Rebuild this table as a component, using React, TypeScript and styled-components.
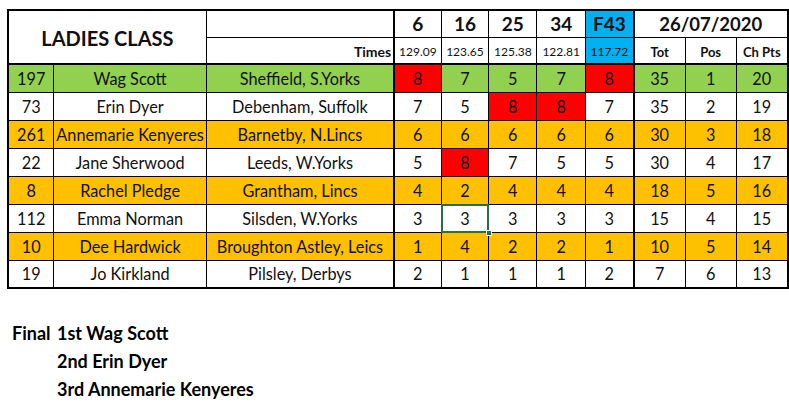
import styled, { createGlobalStyle, css } from "styled-components";

const GlobalStyle = createGlobalStyle`
  body {
    margin: 0;
    background: #ffffff;
    font-family: Lato, "Open Sans", sans-serif;
    color: #111111;
  }
`;

const Page = styled.div`
  padding: 9px 0 0 7px;
`;

const Sheet = styled.table`
  border-collapse: collapse;
  table-layout: fixed;
  border: 2px solid #000;
`;

type CellProps = {
  $bg?: string;
  $thickLeft?: boolean;
  $thickBottom?: boolean;
  $align?: string;
  $selected?: boolean;
};

const Cell = styled.td<CellProps>`
  border: 1px solid #000;
  padding: 0 2px;
  text-align: ${(p) => p.$align || "center"};
  vertical-align: middle;
  font-size: 16.3px;
  white-space: nowrap;
  overflow: hidden;
  background: ${(p) => p.$bg || "#ffffff"};
  ${(p) => p.$thickLeft && "border-left-width: 2px;"}
  ${(p) => p.$thickBottom && "border-bottom-width: 2px;"}
  ${(p) =>
    p.$selected &&
    css`
      position: relative;
      overflow: visible;
      &::after {
        content: "";
        position: absolute;
        left: -1px;
        top: -1px;
        right: -1px;
        bottom: -1px;
        border: 2px solid #217346;
      }
      &::before {
        content: "";
        position: absolute;
        right: -4px;
        bottom: -4px;
        width: 6px;
        height: 6px;
        background: #217346;
        border: 1px solid #fff;
        box-sizing: border-box;
        z-index: 1;
      }
    `}
`;

const Title = styled(Cell)`
  font-size: 20px;
  font-weight: 700;
  padding-top: 2px;
`;

const RaceNo = styled(Cell)`
  font-size: 19px;
  font-weight: 700;
`;

const DateCell = styled(Cell)`
  font-size: 18.5px;
  font-weight: 700;
`;

const Time = styled(Cell)`
  font-size: 12px;
  padding: 3px 0 0;
`;

const Label = styled(Cell)`
  font-size: 13px;
  font-weight: 700;
  padding-top: 3px;
`;

const TimesLabel = styled(Label)`
  font-size: 14px;
  text-align: right;
`;

const HeadRow = styled.tr`
  height: 27px;
`;

const DataRow = styled.tr`
  height: 28px;
`;

const Final = styled.div`
  display: grid;
  grid-template-columns: 45px auto;
  margin: 30px 0 0 5px;
  font-size: 18px;
  font-weight: 700;
  line-height: 28px;
  color: #000;
`;

const GREEN = "#92d050";
const ORANGE = "#ffc000";
const RED = "#ff0000";
const BLUE = "#00b0f0";

const widths = [46, 149, 188, 47, 48, 48, 49, 48, 52, 51, 52];

const rows = [
  { no: "197", name: "Wag Scott", town: "Sheffield, S.Yorks", r: [8, 7, 5, 7, 8], red: [0, 4], tot: 35, pos: 1, pts: 20, bg: GREEN },
  { no: "73", name: "Erin Dyer", town: "Debenham, Suffolk", r: [7, 5, 8, 8, 7], red: [2, 3], tot: 35, pos: 2, pts: 19 },
  { no: "261", name: "Annemarie Kenyeres", town: "Barnetby, N.Lincs", r: [6, 6, 6, 6, 6], red: [], tot: 30, pos: 3, pts: 18, bg: ORANGE },
  { no: "22", name: "Jane Sherwood", town: "Leeds, W.Yorks", r: [5, 8, 7, 5, 5], red: [1], tot: 30, pos: 4, pts: 17 },
  { no: "8", name: "Rachel Pledge", town: "Grantham, Lincs", r: [4, 2, 4, 4, 4], red: [], tot: 18, pos: 5, pts: 16, bg: ORANGE },
  { no: "112", name: "Emma Norman", town: "Silsden, W.Yorks", r: [3, 3, 3, 3, 3], red: [], tot: 15, pos: 4, pts: 15, sel: 1 },
  { no: "10", name: "Dee Hardwick", town: "Broughton Astley, Leics", r: [1, 4, 2, 2, 1], red: [], tot: 10, pos: 5, pts: 14, bg: ORANGE },
  { no: "19", name: "Jo Kirkland", town: "Pilsley, Derbys", r: [2, 1, 1, 1, 2], red: [], tot: 7, pos: 6, pts: 13 },
];

const races = ["6", "16", "25", "34", "F43"];
const times = ["129.09", "123.65", "125.38", "122.81", "117.72"];

export default function App() {
  return (
    <Page>
      <GlobalStyle />
      <Sheet>
        <colgroup>
          {widths.map((w, i) => (
            <col key={i} style={{ width: w }} />
          ))}
        </colgroup>
        <thead>
          <HeadRow>
            <Title colSpan={2} rowSpan={2} $thickBottom>
              LADIES CLASS
            </Title>
            <Cell />
            {races.map((r, i) => (
              <RaceNo key={r} $thickLeft={i === 0} $bg={i === 4 ? BLUE : undefined}>
                {r}
              </RaceNo>
            ))}
            <DateCell colSpan={3} $thickLeft>
              26/07/2020
            </DateCell>
          </HeadRow>
          <HeadRow>
            <TimesLabel $thickBottom>Times</TimesLabel>
            {times.map((t, i) => (
              <Time key={t} $thickLeft={i === 0} $thickBottom $bg={i === 4 ? BLUE : undefined}>
                {t}
              </Time>
            ))}
            <Label $thickLeft $thickBottom>
              Tot
            </Label>
            <Label $thickBottom>Pos</Label>
            <Label $thickBottom>Ch Pts</Label>
          </HeadRow>
        </thead>
        <tbody>
          {rows.map((row) => (
            <DataRow key={row.no}>
              <Cell $bg={row.bg}>{row.no}</Cell>
              <Cell $bg={row.bg}>{row.name}</Cell>
              <Cell $bg={row.bg}>{row.town}</Cell>
              {row.r.map((v, i) => (
                <Cell
                  key={i}
                  $thickLeft={i === 0}
                  $bg={row.red.includes(i) ? RED : row.bg}
                  $selected={row.sel === i}
                >
                  {v}
                </Cell>
              ))}
              <Cell $thickLeft $bg={row.bg}>
                {row.tot}
              </Cell>
              <Cell $bg={row.bg}>{row.pos}</Cell>
              <Cell $bg={row.bg}>{row.pts}</Cell>
            </DataRow>
          ))}
        </tbody>
      </Sheet>
      <Final>
        <span>Final</span>
        <span>1st Wag Scott</span>
        <span />
        <span>2nd Erin Dyer</span>
        <span />
        <span>3rd Annemarie Kenyeres</span>
      </Final>
    </Page>
  );
}
